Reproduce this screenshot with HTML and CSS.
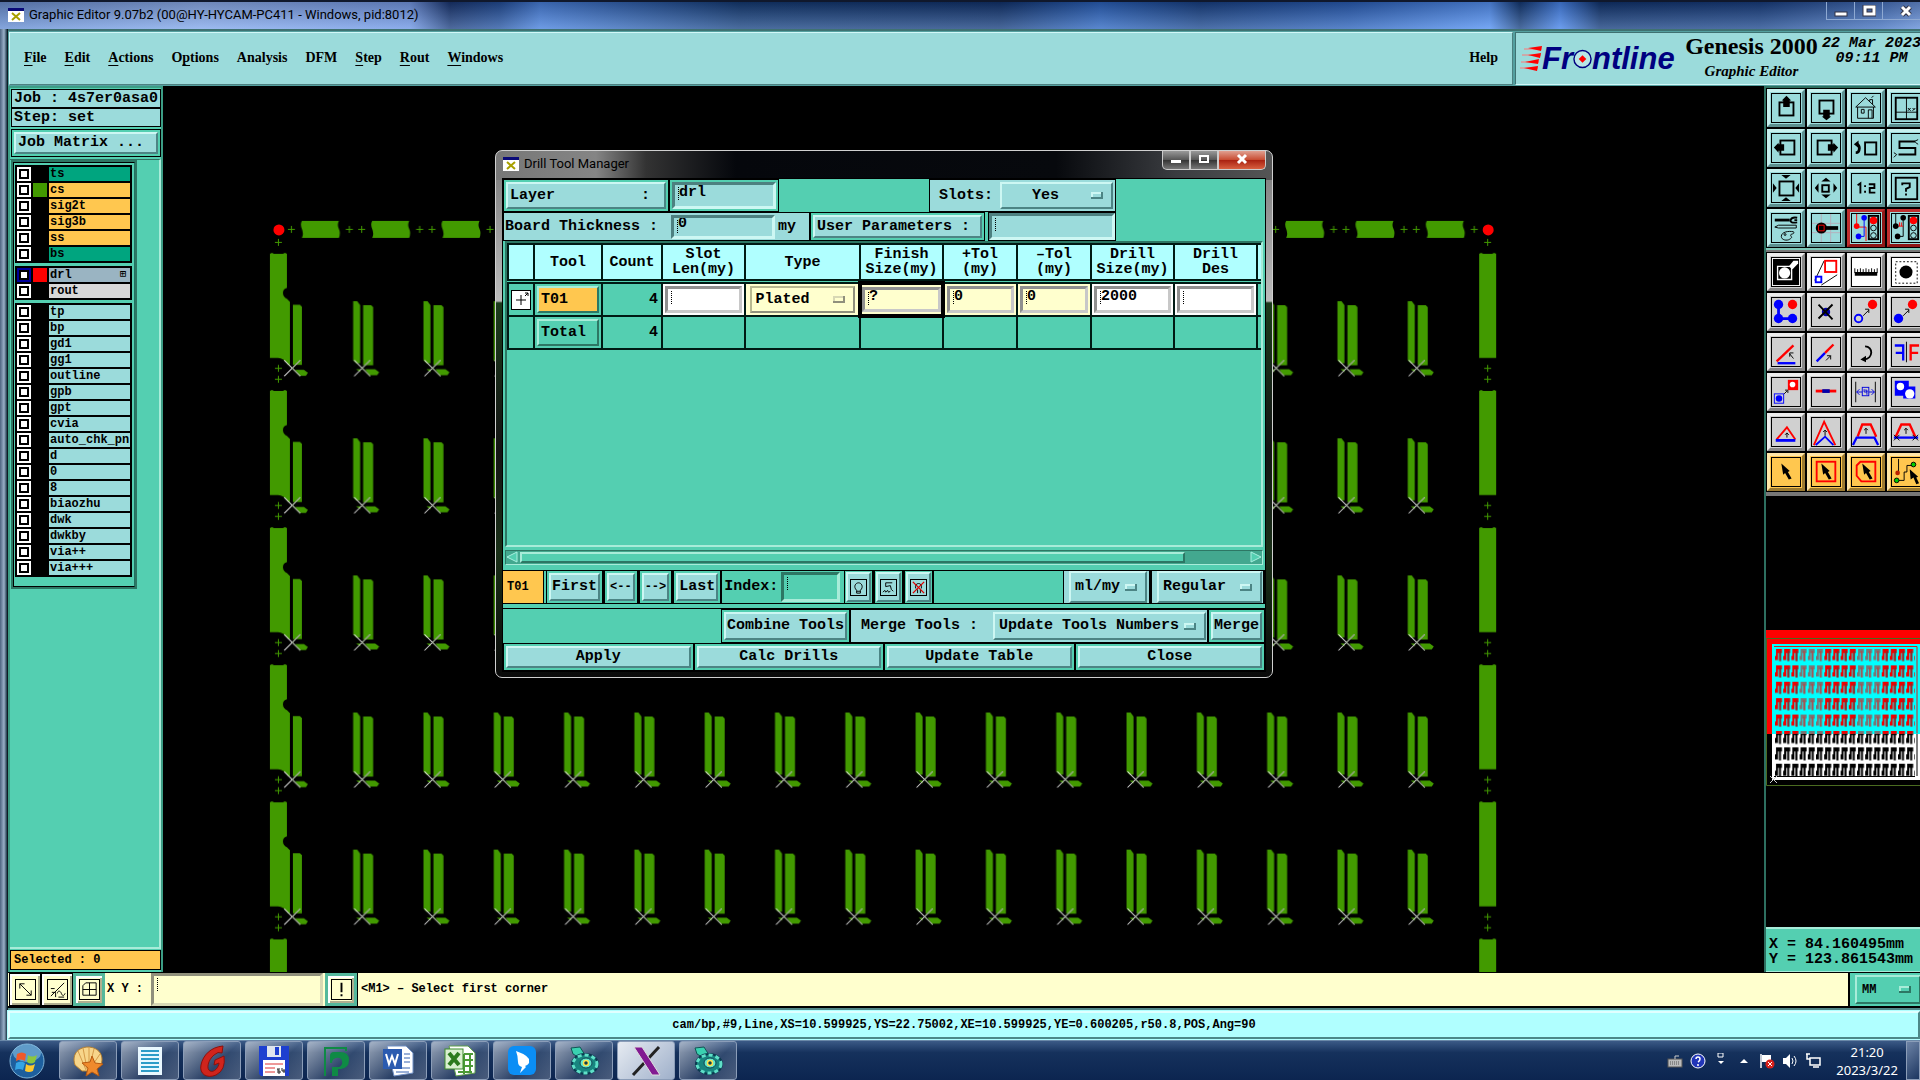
FILE: index.html
```html
<!DOCTYPE html>
<html lang="en">
<head>
    <meta charset="UTF-8">
    <meta name="viewport" content="width=device-width, initial-scale=1.0">
    <title>Graphic Editor</title>
    <link rel="stylesheet" href="styles.css">
</head>
<body>
    <header class="titlebar">
        <svg class="app-icon" viewBox="0 0 16 14"><rect width="16" height="14" fill="#fff"/><rect width="16" height="3" fill="#0a0a78"/><path d="M4 5l8 7M12 5l-8 7" stroke="#a8a000" stroke-width="2"/></svg>
        <h1>Graphic Editor 9.07b2 (00@HY-HYCAM-PC411 - Windows, pid:8012)</h1>
        <div class="window-buttons">
            <button aria-label="Minimize"><svg viewBox="0 0 14 12"><rect x="1" y="7" width="12" height="4" fill="#fff" stroke="#334"/></svg></button>
            <button aria-label="Maximize"><svg viewBox="0 0 14 12"><rect x="3" y="2" width="9" height="7" fill="none" stroke="#334" stroke-width="5"/><rect x="3" y="2" width="9" height="7" fill="none" stroke="#fff" stroke-width="3"/></svg></button>
            <button aria-label="Close"><svg viewBox="0 0 14 12"><path d="M3 2l8 8M11 2l-8 8" stroke="#334" stroke-width="5"/><path d="M3 2l8 8M11 2l-8 8" stroke="#fff" stroke-width="3"/></svg></button>
        </div>
    </header>

    <div class="window">
        <div class="top">
            <nav class="menu">
                <a href="#"><u>F</u>ile</a>
                <a href="#"><u>E</u>dit</a>
                <a href="#"><u>A</u>ctions</a>
                <a href="#">O<u>p</u>tions</a>
                <a href="#">Analysis</a>
                <a href="#">DFM</a>
                <a href="#"><u>S</u>tep</a>
                <a href="#"><u>R</u>out</a>
                <a href="#"><u>W</u>indows</a>
                <a href="#" class="help">Help</a>
            </nav>
            <div class="brand">
                <div class="logo">
                    <svg viewBox="0 0 22 26"><path d="M4 3h18M2 9h19M1 16h18M0 22h18" stroke="#f77" stroke-width="1"/><path d="M8 2l14-2-1 5zM8 9l13-2-1 5zM5 16l14-3-1 5zM4 22l14-2-1 5z" fill="#f00"/></svg>
                    <span>Fr</span>
                    <svg class="ring" viewBox="0 0 20 20"><circle cx="10" cy="10" r="9" fill="#b8e6e6" stroke="#000080" stroke-width="1.500"/><path d="M10 6l4 4-4 4-4-4z" fill="#f00"/></svg>
                    <span>ntline</span>
                </div>
                <div class="product">
                    <strong>Genesis 2000</strong>
                    <em>Graphic Editor</em>
                </div>
                <div class="date">22 Mar 2023<br>09:11 PM</div>
            </div>
        </div>

        <div class="main">
            <aside class="sidebar">
                <div class="job">
                    <div>Job : 4s7er0asa0</div>
                    <div>Step: set</div>
                </div>
                <div class="matrix"><button class="btn">Job Matrix ...</button></div>
                <div class="layers-area">
                    <div class="layers">
                        <div class="group">
                            <label class="layer board"><input type="checkbox"><i></i><span>ts</span></label>
                            <label class="layer signal"><input type="checkbox"><i class="green"></i><span>cs</span></label>
                            <label class="layer signal"><input type="checkbox"><i></i><span>sig2t</span></label>
                            <label class="layer signal"><input type="checkbox"><i></i><span>sig3b</span></label>
                            <label class="layer signal"><input type="checkbox"><i></i><span>ss</span></label>
                            <label class="layer board"><input type="checkbox"><i></i><span>bs</span></label>
                        </div>
                        <div class="group">
                            <label class="layer drill"><input type="checkbox" checked><i class="red"></i><span>drl</span><b>⊞</b></label>
                            <label class="layer rout"><input type="checkbox"><i></i><span>rout</span></label>
                        </div>
                        <div class="group">
                            <label class="layer"><input type="checkbox"><i></i><span>tp</span></label>
                            <label class="layer"><input type="checkbox"><i></i><span>bp</span></label>
                            <label class="layer"><input type="checkbox"><i></i><span>gd1</span></label>
                            <label class="layer"><input type="checkbox"><i></i><span>gg1</span></label>
                            <label class="layer"><input type="checkbox"><i></i><span>outline</span></label>
                            <label class="layer"><input type="checkbox"><i></i><span>gpb</span></label>
                            <label class="layer"><input type="checkbox"><i></i><span>gpt</span></label>
                            <label class="layer"><input type="checkbox"><i></i><span>cvia</span></label>
                            <label class="layer"><input type="checkbox"><i></i><span>auto_chk_pnl</span></label>
                            <label class="layer"><input type="checkbox"><i></i><span>d</span></label>
                            <label class="layer"><input type="checkbox"><i></i><span>0</span></label>
                            <label class="layer"><input type="checkbox"><i></i><span>8</span></label>
                            <label class="layer"><input type="checkbox"><i></i><span>biaozhu</span></label>
                            <label class="layer"><input type="checkbox"><i></i><span>dwk</span></label>
                            <label class="layer"><input type="checkbox"><i></i><span>dwkby</span></label>
                            <label class="layer"><input type="checkbox"><i></i><span>via++</span></label>
                            <label class="layer"><input type="checkbox"><i></i><span>via+++</span></label>
                        </div>
                    </div>
                </div>
                <div class="selected">Selected : 0</div>
            </aside>

            <main class="canvas">
                <svg viewBox="163 86 1602 888" preserveAspectRatio="xMinYMin slice">
                    <defs>
                        <g id="star"><path d="M-8 -8L8 8M8 -8L-8 8" stroke="#ddd" fill="none"/><path d="M0 0L8 -8M0 0L8 8" stroke="#8b9a80"/></g>
                        <pattern id="cells" patternUnits="userSpaceOnUse" x="327" y="288.4" width="70.35" height="137.2">
                            <g transform="translate(35.3 80)">
                                <path d="M-9 -67h4l3 4v58h-4l-3 -3zM1 -63h8l2 2v58h-10zM3 1h10l4 3-2 3H7zM-6 1h4v3z" fill="#429a00"/>
                                <use href="#star"/>
                            </g>
                        </pattern>
                        <pattern id="left" patternUnits="userSpaceOnUse" x="262" y="248" width="65" height="137.2">
                            <path d="M8 6l2-1 2 1h9l2-1 2 1v34q-4 1-4 5t4 6l3 3v63h-2q-4-7-10-7h-8zM31 57h7l2 2v58h-9zM33 122h9l4 3-2 3h-6z" fill="#429a00"/>
                            <path d="M13 120.500h7M16.500 117v7M13 131.500h7M16.500 128v7" stroke="#429a00"/>
                            <use href="#star" x="30.300" y="120.400"/>
                        </pattern>
                        <pattern id="right" patternUnits="userSpaceOnUse" x="1472" y="248" width="34" height="137.2">
                            <path d="M8 6l2-1 2 1h9l2-1 2 1v104H8z" fill="#429a00"/>
                            <path d="M13 120.500h7M16.500 117v7M13 131.500h7M16.500 128v7" stroke="#429a00"/>
                        </pattern>
                        <pattern id="edge" patternUnits="userSpaceOnUse" x="285" y="215" width="70.35" height="30">
                            <path d="M17 6h37q-2 4 0 8t0 9H17q2-4 0-9t0-8z" fill="#429a00"/>
                            <path d="M3 14.500h7M6.500 11v7M61 14.500h7M64.500 11v7" stroke="#429a00"/>
                        </pattern>
                    </defs>
                    <rect x="163" y="86" width="1602" height="888"/>
                    <rect x="285" y="215" width="1197" height="30" fill="url(#edge)"/>
                    <rect x="262" y="248" width="65" height="726" fill="url(#left)"/>
                    <rect x="327" y="288" width="1125" height="686" fill="url(#cells)"/>
                    <rect x="1472" y="248" width="34" height="726" fill="url(#right)"/>
                    <path d="M275 242.500h7M278.500 239v7M1485 242.500h7M1488.500 239v7" stroke="#429a00"/>
                    <circle cx="279" cy="230" r="5.500" fill="#f00"/>
                    <circle cx="1489" cy="230" r="5.500" fill="#f00"/>
                </svg>
            </main>

            <aside class="tools">
                <div class="tool-grid">
                    <button aria-label="Pan up"><svg viewBox="0 0 30 30"><rect x="8" y="9" width="15" height="14" class="o2"/><path d="M15.500 2l5 5h-1.500v7h-7V7h-1.500z"/></svg></button>
                    <button aria-label="Pan down"><svg viewBox="0 0 30 30"><rect x="8" y="7" width="15" height="14" class="o2"/><path d="M12 17h7v7h1.500l-5 4-5-4H12z"/></svg></button>
                    <button aria-label="Home"><svg viewBox="0 0 30 30"><path d="M6 14v12h17V14M4 14L14.500 4 25 14H4M19 8V6h3v5M21 4l2-2M10 16.500h3v4h-3zM17.500 26v-9h4v9" class="o"/></svg></button>
                    <button aria-label="Zoom XY"><svg viewBox="0 0 30 30"><rect x="4" y="4" width="23" height="23" class="o2"/><path d="M15.500 4v23M4 19.500h23M17 15l3 3M20 15l-3 3M22 15l2 2M25 15l-3 3" class="o"/></svg></button>
                    <button aria-label="Pan left"><svg viewBox="0 0 30 30"><rect x="9" y="7" width="15" height="15" class="o2"/><path d="M2 14.500l5-5V11h6v7H7v2z"/></svg></button>
                    <button aria-label="Pan right"><svg viewBox="0 0 30 30"><rect x="6" y="7" width="15" height="15" class="o2"/><path d="M28 14.500l-5-5V11h-6v7h6v2z"/></svg></button>
                    <button aria-label="Previous view"><svg viewBox="0 0 30 30"><rect x="14" y="9" width="12" height="13" class="o2"/><path d="M4 20c5 0 5-9 1-9" class="o3"/><path d="M2 11l5-4v8z"/></svg></button>
                    <button aria-label="Snake view"><svg viewBox="0 0 30 30"><path d="M25 8H8v7h17v7H7" class="o2"/><path d="M24 8l4-2M25 9l3 2M2 20l3 2-3 3" class="o"/></svg></button>
                    <button aria-label="Zoom in"><svg viewBox="0 0 30 30"><rect x="8" y="8" width="15" height="15" class="o2"/><path d="M10 1h10l-5 4zM10 29h10l-5-4zM1 10v10l4-5zM29 10v10l-4-5z"/></svg></button>
                    <button aria-label="Zoom out"><svg viewBox="0 0 30 30"><rect x="11" y="12" width="7" height="7" class="o2"/><path d="M10 8h10l-5-4zM10 22h10l-5 4zM7 10v10l-4-5zM23 10v10l4-5z"/></svg></button>
                    <button aria-label="Scale 1:2"><svg viewBox="0 0 30 30"><path d="M6 12l3-2v11M18 11h6v4h-5v5h6" class="o2"/><path d="M13 12h2v2h-2zM13 18h2v2h-2z"/></svg></button>
                    <button aria-label="Help"><svg viewBox="0 0 30 30"><rect x="4" y="4" width="23" height="23" class="o2"/><path d="M11 12v-2h8v4l-4 2v3M15 21v2" class="o2"/></svg></button>
                    <button aria-label="Settings"><svg viewBox="0 0 30 30"><path d="M3 5h16v3H3z"/><path d="M27 4q-6-1-7 2.500t7 2.500M24 6.500h3" class="o2"/><path d="M3 14l4-2h19v3H7zM10 24c0-5 8-6 13-5 2 3-4 2-3 4s2 2-1 4-9 1-9-3" class="o"/><circle cx="14" cy="22" r="1" class="o"/></svg></button>
                    <button aria-label="Snap"><svg viewBox="0 0 30 30"><path d="M10 0v30M20 0v30M0 10h30M0 20h30" stroke="#b6aebb"/><circle cx="10" cy="15" r="6"/><path d="M15 13h13v4H15z"/><path d="M7 12h6v6H7z" fill="none" stroke="#f00"/></svg></button>
                    <button aria-label="Net check" class="stop"><svg viewBox="0 0 30 30"><rect x="18" y="2" width="10" height="25" class="o2"/><circle cx="23" cy="7" r="4" fill="#f00"/><circle cx="23" cy="15" r="3" class="o"/><circle cx="23" cy="23" r="3" class="o"/><path d="M5 0v14h10v15" stroke="#f00" fill="none"/><path d="M13 4v20H8" stroke="#00f" fill="none"/><circle cx="5" cy="13" r="3" fill="#f00"/><circle cx="13" cy="4" r="3" fill="#00f"/><circle cx="7" cy="24" r="3" fill="#00f"/></svg></button>
                    <button aria-label="Net stop" class="stop"><svg viewBox="0 0 30 30"><rect x="18" y="2" width="10" height="25" class="o2"/><circle cx="23" cy="7" r="4" fill="#f00"/><circle cx="23" cy="15" r="3" class="o"/><circle cx="23" cy="23" r="3" class="o"/><path d="M4 0v12M12 4v20H6" class="o"/><path d="M5 13h7M8 9v4M10 9v4" stroke="#f00"/><circle cx="4" cy="13" r="3"/><circle cx="12" cy="4" r="3"/><circle cx="6" cy="24" r="3"/></svg></button>
                </div>
                <div class="tool-grid edit">
                    <button aria-label="Select feature" class="white"><svg viewBox="0 0 30 30"><rect x="1" y="1" width="28" height="28"/><path d="M6 9h15v14H6z" fill="none" stroke="#fff" stroke-width="1.500"/><circle cx="13.500" cy="16" r="6" fill="#fff"/><path d="M18 9l5-6h5v3l-6 6z" fill="#fff"/></svg></button>
                    <button aria-label="Transform" class="white"><svg viewBox="0 0 30 30"><path d="M3 24L13 3M10 29l17-11" class="o"/><rect x="14" y="3" width="12" height="12" fill="none" stroke="#f00" stroke-width="2"/><rect x="4" y="20" width="6" height="6" fill="none" stroke="#00f" stroke-width="2"/></svg></button>
                    <button aria-label="Measure" class="white"><svg viewBox="0 0 30 30"><path d="M3 11v5h24v-5M6 12v4M9 11v5M12 12v4M15 11v5M18 12v4M21 11v5M24 12v4" class="o"/><path d="M3 15h24v4H3z"/></svg></button>
                    <button aria-label="Pad" class="white"><svg viewBox="0 0 30 30"><rect x="4" y="4" width="23" height="23" class="o" stroke-dasharray="2 2"/><circle cx="15" cy="15" r="7"/></svg></button>
                    <button aria-label="Copy"><svg viewBox="0 0 30 30"><path d="M7 7v15h15" stroke="#00f" stroke-width="3" fill="none"/><circle cx="7" cy="7" r="5" fill="#00f"/><circle cx="7" cy="22" r="5" fill="#00f"/><circle cx="22" cy="22" r="5" fill="#00f"/><circle cx="22" cy="7" r="5" fill="#f00"/></svg></button>
                    <button aria-label="Delete"><svg viewBox="0 0 30 30"><circle cx="15" cy="15" r="4.500" fill="#00a"/><path d="M7 7l15 16M22 7L7 22" class="o2"/></svg></button>
                    <button aria-label="Move copy"><svg viewBox="0 0 30 30"><circle cx="22" cy="7" r="5" fill="#f00"/><circle cx="7" cy="22" r="4" fill="none" stroke="#00f" stroke-width="2"/><path d="M12 19l6-6M14 12h4v4" class="o"/></svg></button>
                    <button aria-label="Move"><svg viewBox="0 0 30 30"><circle cx="22" cy="7" r="5" fill="#f00"/><circle cx="7" cy="22" r="5" fill="#00f"/><path d="M12 19l6-6M14 12h4v4" class="o"/></svg></button>
                    <button aria-label="Rotate"><svg viewBox="0 0 30 30"><path d="M5 25L23 8" stroke="#f00" stroke-width="2.500"/><path d="M6 27h19" stroke="#00f" stroke-width="2.500"/><path d="M23 22l-4-5M19 20v-4h4" class="o"/></svg></button>
                    <button aria-label="Stretch"><svg viewBox="0 0 30 30"><path d="M5 25l9-9" stroke="#00f" stroke-width="2.500"/><path d="M14 16l9-9" stroke="#f00" stroke-width="2.500"/><path d="M15 24l5-5M16 19h4v4" class="o"/></svg></button>
                    <button aria-label="Turn"><svg viewBox="0 0 30 30"><path d="M14 9c9 0 9 13-1 14" class="o2"/><path d="M9 23l6-4v7z"/></svg></button>
                    <button aria-label="Mirror"><svg viewBox="0 0 30 30"><path d="M3 8h9v16M4 16h8" stroke="#00f" stroke-width="2.500" fill="none"/><path d="M29 8h-9v16M28 16h-8" stroke="#f00" stroke-width="2.500" fill="none"/><path d="M15.500 4v22" class="o"/></svg></button>
                    <button aria-label="Resize pad"><svg viewBox="0 0 30 30"><rect x="17" y="2" width="11" height="11" fill="#f00"/><circle cx="22" cy="7" r="3" fill="#fff"/><rect x="2.500" y="17" width="10" height="10" fill="none" stroke="#00f"/><circle cx="7.500" cy="22" r="3.500" fill="#00f"/><path d="M13 17l3-3M14 13h3v3" class="o"/></svg></button>
                    <button aria-label="Line"><svg viewBox="0 0 30 30"><path d="M4 14h22" stroke="#f00" stroke-width="3"/><path d="M11 14h8" stroke="#00a" stroke-width="4"/></svg></button>
                    <button aria-label="Spacing"><svg viewBox="0 0 30 30"><path d="M4 4v22M25 4v22" class="o"/><path d="M5 15h19M8 12l-3 3 3 3M21 12l3 3-3 3" stroke="#00d" fill="none"/><rect x="11" y="10" width="7" height="9" fill="#d0d0d0" stroke="#00d"/><path d="M13 12v3h3v-2h-2M16 14v4" stroke="#00d" fill="none"/></svg></button>
                    <button aria-label="Surface"><svg viewBox="0 0 30 30"><path d="M3 3h15v6h7v13H12v-3H3z" fill="#00f"/><circle cx="9" cy="9" r="4" fill="#fff"/><circle cx="19" cy="17" r="5" fill="#fff"/></svg></button>
                    <button aria-label="Triangle"><svg viewBox="0 0 30 30"><path d="M5 23L16 10l9 13" stroke="#f00" stroke-width="2" fill="none"/><path d="M4 24h21" stroke="#00f" stroke-width="3"/><path d="M16 21v-5M14 18l2-2 2 2" class="o"/></svg></button>
                    <button aria-label="Angle"><svg viewBox="0 0 30 30"><path d="M2 29L13 4l12 25" stroke="#f00" stroke-width="2" fill="none"/><path d="M4 29l10-9 9 9" stroke="#00f" stroke-width="2" fill="none"/><path d="M14 19v-6M12 15l2-2 2 2" class="o"/></svg></button>
                    <button aria-label="Trapezoid"><svg viewBox="0 0 30 30"><path d="M6 20l5-13h9l6 13" stroke="#f00" stroke-width="2.500" fill="none"/><path d="M1 29l4-8h19l4 8" stroke="#00f" stroke-width="2.500" fill="none"/><path d="M15 17v-6M13 13l2-2 2 2" class="o"/></svg></button>
                    <button aria-label="Trapezoid cut"><svg viewBox="0 0 30 30"><path d="M4 20l6-13h9l6 13" stroke="#f00" stroke-width="2.500" fill="none"/><path d="M2 21h26" stroke="#00f" stroke-width="2.500"/><path d="M15 17v-6M13 13l2-2 2 2M2 18l6 6M8 18l-6 6M22 18l6 6M28 18l-6 6" class="o"/></svg></button>
                    <button aria-label="Select" class="pick"><svg viewBox="0 0 30 30"><path d="M10 6l9 8-2 1 4 7-3 1-4-7-2 2z"/></svg></button>
                    <button aria-label="Select in rectangle" class="pick"><svg viewBox="0 0 30 30"><rect x="5" y="4" width="20" height="21" fill="none" stroke="#f00" stroke-width="2"/><path d="M10 6l9 8-2 1 4 7-3 1-4-7-2 2z"/></svg></button>
                    <button aria-label="Select in polygon" class="pick"><svg viewBox="0 0 30 30"><path d="M9 4h16v21H10l-5-6V8z" fill="none" stroke="#f00" stroke-width="2"/><path d="M11 6l9 8-2 1 4 7-3 1-4-7-2 2z"/></svg></button>
                    <button aria-label="Select net" class="pick"><svg viewBox="0 0 30 30"><path d="M7 1v16M7 24h6V15h3V8h7" class="o"/><circle cx="6" cy="16" r="2.500" fill="#b20"/><circle cx="5" cy="24" r="2.500" fill="#0c0" stroke="#000"/><circle cx="23" cy="7" r="2.500" fill="#0c0" stroke="#000"/><path d="M19 12l9 8-2 1 3 6-3 1-3-7-3 2z"/></svg></button>
                </div>
                <svg class="overview" viewBox="1766 496 154 433" preserveAspectRatio="xMinYMin slice">
                    <defs>
                        <pattern id="unit-red" patternUnits="userSpaceOnUse" x="1775" y="648" width="8.2" height="16.4"><path d="M1 1h6v4h-1v8H4V5H3v7H0V8h1z" fill="#f00000"/><path d="M5.500 3v10" stroke="#444"/></pattern>
                        <pattern id="unit-gray" patternUnits="userSpaceOnUse" x="1775" y="648" width="8.2" height="16.4"><path d="M1 1h6v4h-1v8H4V5H3v7H0V8h1z" fill="#777"/><path d="M4.500 3v10" stroke="#c33"/></pattern>
                        <pattern id="unit-black" patternUnits="userSpaceOnUse" x="1775" y="648" width="8.2" height="16.4"><path d="M1 1h6v4h-1v9H4V5H3v8H0V8h1z"/></pattern>
                    </defs>
                    <rect x="1766" y="496" width="154" height="433"/>
                    <rect x="1766" y="630" width="154" height="104" fill="#f00"/>
                    <path d="M1920 638.500H1766.500V785.500H1920" fill="none" stroke="#4a6b20"/>
                    <rect x="1772" y="644" width="148" height="90" fill="#00ffff"/>
                    <rect x="1772" y="734" width="148" height="46" fill="#fff"/>
                    <path d="M1774 646.500h143v87" fill="none" stroke="#c22"/>
                    <rect x="1775" y="648" width="140" height="86" fill="url(#unit-red)"/>
                    <path d="M1799.600 648h24.600v86h-24.600zM1857 648h24.600v86H1857z" fill="#00ffff"/>
                    <path d="M1799.600 648h24.600v86h-24.600zM1857 648h24.600v86H1857z" fill="url(#unit-gray)"/>
                    <rect x="1775" y="734" width="140" height="42" fill="url(#unit-black)"/>
                    <path d="M1917 734v42M1774 776.500h141" fill="none" stroke="#000"/>
                    <path d="M1770 776l7 7M1777 776l-7 7" stroke="#ccc"/>
                </svg>
                <div class="position">X = 84.160495mm<br>Y = 123.861543mm</div>
            </aside>
        </div>

        <div class="prompt">
            <button aria-label="Absolute"><svg viewBox="0 0 20 20"><path d="M4 4l12 12M4 9V4h5M16 11v5h-5" class="o"/></svg></button>
            <button aria-label="Angle mode"><svg viewBox="0 0 20 20"><path d="M3 17L17 3M3 9h4M4 13h4v5M10 14c0-3 3-3 4 0s3 3 4 0M11 18h6" class="o"/></svg></button>
            <button aria-label="Grid" class="teal"><svg viewBox="0 0 20 20"><path d="M3 6l3-3h11v13H3zM10 3v13M3 10h14" class="o"/></svg></button>
            <label for="xy">X Y :</label>
            <input id="xy" type="text" class="field">
            <button aria-label="Alert" class="teal"><svg viewBox="0 0 20 20"><path d="M9 3h2v10H9zM9 15h2v2H9z"/></svg></button>
            <p>&lt;M1&gt; – Select first corner</p>
            <div class="units"><select aria-label="Units" class="menu-select"><option>MM</option></select></div>
        </div>
        <div class="status"><div>cam/bp,#9,Line,XS=10.599925,YS=22.75002,XE=10.599925,YE=0.600205,r50.8,POS,Ang=90</div></div>
    </div>

    <section class="dialog" aria-label="Drill Tool Manager">
        <header>
            <svg class="app-icon" viewBox="0 0 16 14"><rect width="16" height="14" fill="#fff"/><rect width="16" height="3" fill="#0a0a78"/><path d="M4 5l8 7M12 5l-8 7" stroke="#a8a000" stroke-width="2"/></svg>
            <h2>Drill Tool Manager</h2>
            <div class="window-buttons">
                <button aria-label="Minimize dialog"><svg viewBox="0 0 14 12"><rect x="2" y="7" width="10" height="3" fill="#fff"/></svg></button>
                <button aria-label="Maximize dialog"><svg viewBox="0 0 14 12"><rect x="3" y="3" width="8" height="6" fill="none" stroke="#fff" stroke-width="2"/></svg></button>
                <button aria-label="Close dialog" class="close"><svg viewBox="0 0 14 12"><path d="M3 2l8 8M11 2l-8 8" stroke="#fff" stroke-width="3"/></svg></button>
            </div>
        </header>
        <div class="dialog-body">
            <div class="form-row">
                <div class="box layer-box"><button class="btn spread"><span>Layer</span><span>:</span></button></div>
                <div class="box"><input type="text" class="field layer-name" aria-label="Layer" value="drl"></div>
                <div class="space"></div>
                <div class="box aqua slots"><label for="slots">Slots:</label><select id="slots" class="menu-select"><option>Yes</option></select></div>
                <div class="space last"></div>
            </div>
            <div class="form-row thick">
                <div class="box aqua"><label for="thickness">Board Thickness :</label><input id="thickness" type="text" class="field" value="0"><span>my</span></div>
                <div class="box params"><button class="btn">User Parameters :</button></div>
                <div class="box user"><input type="text" class="field" aria-label="User Parameters"></div>
                <div class="space last"></div>
            </div>
            <div class="table-wrap">
                <table>
                    <colgroup><col class="w-sel"><col class="w-tool"><col class="w-count"><col class="w-wide"><col class="w-type"><col class="w-wide"><col class="w-tol"><col class="w-tol"><col class="w-wide"><col class="w-wide"><col class="w-wide"></colgroup>
                    <thead>
                        <tr><th></th><th>Tool</th><th>Count</th><th>Slot<br>Len(my)</th><th>Type</th><th>Finish<br>Size(my)</th><th>+Tol<br>(my)</th><th>–Tol<br>(my)</th><th>Drill<br>Size(my)</th><th>Drill<br>Des</th><th class="cut"><br>S</th></tr>
                    </thead>
                    <tbody>
                        <tr>
                            <td><button class="expand" aria-label="Expand T01"><svg viewBox="0 0 18 18"><path d="M9 4v10M4 9h10M13 5l3-3h-3M16 2v3" class="o"/></svg></button></td>
                            <td><button class="btn orange">T01</button></td>
                            <td class="num">4</td>
                            <td class="white"><input type="text" class="field" aria-label="Slot length"></td>
                            <td class="cream"><select class="menu-select" aria-label="Type"><option>Plated</option></select></td>
                            <td class="cream active"><input type="text" class="field" aria-label="Finish size" value="?"></td>
                            <td class="cream"><input type="text" class="field" aria-label="Plus tolerance" value="0"></td>
                            <td class="cream"><input type="text" class="field" aria-label="Minus tolerance" value="0"></td>
                            <td class="white"><input type="text" class="field" aria-label="Drill size" value="2000"></td>
                            <td class="white"><input type="text" class="field" aria-label="Drill designation"></td>
                            <td></td>
                        </tr>
                        <tr><td></td><td><button class="btn plain">Total</button></td><td class="num">4</td><td></td><td></td><td></td><td></td><td></td><td></td><td></td><td></td></tr>
                    </tbody>
                </table>
            </div>
            <div class="scrollbar"><svg viewBox="0 0 12 12"><path d="M11 1v10L1 6z" fill="#54cfb1" stroke="#a8f0df"/></svg><div></div><svg viewBox="0 0 12 12"><path d="M1 1v10l10-5z" fill="#54cfb1" stroke="#a8f0df"/></svg></div>
            <div class="form-row nav-row">
                <div class="current">T01</div>
                <div class="box"><button class="btn">First</button></div>
                <div class="box"><button class="btn arrow">&lt;--</button></div>
                <div class="box"><button class="btn arrow">--&gt;</button></div>
                <div class="box"><button class="btn">Last</button></div>
                <div class="index"><label for="index">Index:</label><input id="index" type="text" class="field"></div>
                <div class="box icon-box"><button class="btn icon" aria-label="Highlight"><svg viewBox="0 0 16 16"><path d="M6 11c-4-4-1-8 2-8s6 4 2 8v3H6zM6 12h4" class="o"/></svg></button></div>
                <div class="box icon-box"><button class="btn icon" aria-label="Select tool"><svg viewBox="0 0 16 16"><path d="M12 3H5v4l5-1 1 4 2 2M2 13l2-2 1 2 2-2 1 2 2-1" class="o"/></svg></button></div>
                <div class="box icon-box"><button class="btn icon" aria-label="Clear"><svg viewBox="0 0 16 16"><path d="M5 9c-2-7 8-7 6 0M7 10v4M10 10v4" class="o"/><path d="M2 2l12 12M14 2L2 14" stroke="#e00000" stroke-width="1.500"/></svg></button></div>
                <div class="space last"></div>
                <div class="box aqua unit"><select class="menu-select" aria-label="Dialog units"><option>ml/my</option></select></div>
                <div class="box aqua mode"><select class="menu-select" aria-label="Mode"><option>Regular</option></select></div>
            </div>
            <div class="form-row merge-row">
                <div class="space last"></div>
                <div class="box"><button class="btn">Combine Tools</button></div>
                <div class="box aqua merge"><label for="merge">Merge Tools :</label><select id="merge" class="menu-select"><option>Update Tools Numbers</option></select></div>
                <div class="box"><button class="btn">Merge</button></div>
            </div>
            <div class="form-row actions">
                <div class="box"><button class="btn">Apply</button></div>
                <div class="box"><button class="btn">Calc Drills</button></div>
                <div class="box"><button class="btn">Update Table</button></div>
                <div class="box"><button class="btn">Close</button></div>
            </div>
        </div>
    </section>

    <footer class="taskbar">
        <button class="start" aria-label="Start"><svg viewBox="0 0 38 38"><circle cx="19" cy="19" r="17" fill="#1d5f9e" stroke="#7fb4d8"/><ellipse cx="19" cy="11" rx="14" ry="9" fill="#8cc3e4" opacity=".6"/><path d="M9 12q5-3 9 0l-1 7q-4-3-9 0z" fill="#f0592a"/><path d="M20 13q4 3 9 0l-2 7q-4 3-8 0z" fill="#8cc63e"/><path d="M8 21q5-3 9 0l-2 7q-4-2-8 0z" fill="#35a5e5"/><path d="M18 22q4 3 9 0l-2 7q-4 2-8 0z" fill="#fdc82f"/></svg></button>
        <div class="tasks">
            <button aria-label="Shell"><svg viewBox="0 0 32 32"><path d="M3 20C-1 8 8 2 16 2s17 6 13 18l-8 6H10z" fill="#f7d58a" stroke="#b8812f"/><path d="M6 6l8 19M11 3l4 21M17 2v22M22 4l-5 20M28 9L18 24" stroke="#d49b49"/><path d="M20 11l3 7 8 1-6 5 2 7-7-4-6 4 2-8-6-5 8-1z" fill="#f08a2c" stroke="#b85a10"/></svg></button>
            <button aria-label="Notes"><svg viewBox="0 0 32 32"><rect x="4" y="2" width="24" height="28" fill="#e9f8ff"/><path d="M7 6h18M7 10h18M7 14h18M7 18h18M7 22h18M7 26h18" stroke="#2d9cc8" stroke-width="2"/></svg></button>
            <button aria-label="G editor"><svg viewBox="0 0 32 32"><path d="M27 1l-1 7q-4-2-8 2c-6 5-8 14-4 16s9-4 9-8l-5 2 1-5 9-4q2 14-8 19c-9 4-17-1-15-10C7 10 15 2 27 1z" fill="#d0241c" stroke="#8e100c"/></svg></button>
            <button aria-label="Disk"><svg viewBox="0 0 32 32"><path d="M1 1h30v30H3l-2-2z" fill="#1d3fd0"/><rect x="9" y="1" width="14" height="11" fill="#dfe5ee"/><rect x="17" y="2" width="4" height="8" fill="#1d3fd0"/><rect x="5" y="15" width="22" height="16" fill="#fff"/><path d="M7 19h18M7 23h10M7 27h10" stroke="#d33"/><path d="M19 24h3M20 24v4h2v-2h-2M24 23v3h3M26 24v4" stroke="#222" fill="none"/></svg></button>
            <button aria-label="P editor"><svg viewBox="0 0 32 32"><path d="M5 31V3h21v3" fill="none" stroke="#0f8a45" stroke-width="2"/><path d="M10 11q0-4 4-4h6q9 0 9 8t-8 9h-3v7h-6v-9h7q4-2 3-6t-6-3q-4 1-4 5h-2z" fill="#0f8a45"/></svg></button>
            <button aria-label="Word"><svg viewBox="0 0 32 32"><path d="M5 1h19l7 7v20l-19 3z" fill="#fff" stroke="#6f8fc4"/><path d="M22 9h6M22 13h6M22 17h6M14 23h14M14 27h13" stroke="#3763b0"/><rect x="1" y="4" width="19" height="20" fill="#2b5bb0"/><path d="M4 9l3 10 3-8 3 8 3-10" fill="none" stroke="#fff" stroke-width="2"/></svg></button>
            <button aria-label="Excel"><svg viewBox="0 0 32 32"><path d="M5 1h19l7 7v20l-19 3z" fill="#fff" stroke="#5f9f4a"/><path d="M20 9h9M20 15h9M14 21h15M14 27h14M20 9v20M26 9v18" stroke="#4b9a35" stroke-width="2"/><rect x="1" y="4" width="18" height="20" fill="#d9efd0" stroke="#3c8b2c"/><path d="M5 8l10 12M15 8L5 20" stroke="#2c7a1e" stroke-width="4"/></svg></button>
            <button aria-label="Messenger"><svg viewBox="0 0 32 32"><rect x="2" y="1" width="28" height="29" rx="6" fill="#0b8ef5"/><path d="M10 6q14 5 13 10 1 3-4 5l1 1-6 6 2-6q-4-1-4-5 0-6-2-11z" fill="#fff"/></svg></button>
            <button aria-label="Genesis"><svg viewBox="0 0 32 32"><path d="M3 3l9-1 5 8-5 3-7-4z" fill="#3ad1b0" stroke="#155"/><ellipse cx="17" cy="19" rx="13" ry="10" fill="#18857f" stroke="#0b3a50" stroke-width="2"/><ellipse cx="17" cy="19" rx="12" ry="9" fill="none" stroke="#5fe0c8" stroke-width="3" stroke-dasharray="4 3"/><ellipse cx="18" cy="18" rx="6" ry="5" fill="#61e7cb" stroke="#145"/><circle cx="18" cy="18" r="2.500" fill="#10404a" stroke="#ffe14d" stroke-width="1.500"/></svg></button>
            <button aria-label="X server" class="current-task"><svg viewBox="0 0 32 32"><path d="M29 2L3 30" stroke="#222" stroke-width="3"/><path d="M4 2h8l18 28h-8z" fill="#821a92" stroke="#ddd"/></svg></button>
            <button aria-label="Genesis tools"><svg viewBox="0 0 32 32"><path d="M3 3l9-1 5 8-5 3-7-4z" fill="#3ad1b0" stroke="#155"/><ellipse cx="17" cy="19" rx="13" ry="10" fill="#18857f" stroke="#0b3a50" stroke-width="2"/><ellipse cx="17" cy="19" rx="12" ry="9" fill="none" stroke="#5fe0c8" stroke-width="3" stroke-dasharray="4 3"/><ellipse cx="18" cy="18" rx="6" ry="5" fill="#61e7cb" stroke="#145"/><circle cx="18" cy="18" r="2.500" fill="#10404a" stroke="#ffe14d" stroke-width="1.500"/></svg></button>
        </div>
        <div class="tray">
            <svg viewBox="0 0 16 16"><rect x="1" y="6" width="14" height="8" fill="#bbb" stroke="#555"/><path d="M3 9h10M3 11h10" stroke="#555" stroke-dasharray="1 1"/><path d="M8 6V3h4" stroke="#ccc" fill="none"/></svg>
            <svg viewBox="0 0 16 16"><circle cx="8" cy="8" r="7" fill="#2236b8" stroke="#fff"/><path d="M6 6q0-2 2-2t2 2-2 3M8 11v2" stroke="#fff" stroke-width="1.500" fill="none"/></svg>
            <svg viewBox="0 0 16 16"><path d="M5 0h5v4H5z" fill="none" stroke="#fff"/><path d="M5 8h6l-3 3z" fill="#fff"/></svg>
            <svg viewBox="0 0 16 16"><path d="M4 10h8L8 6z" fill="#fff"/></svg>
            <svg viewBox="0 0 16 16"><path d="M2 1v14" stroke="#fff" stroke-width="1.500"/><path d="M3 2h9v7H3z" fill="#fff"/><circle cx="11" cy="11" r="4.500" fill="#d8201a"/><path d="M9 9l4 4M13 9l-4 4" stroke="#fff"/></svg>
            <svg viewBox="0 0 16 16"><path d="M1 5h3l4-4v14l-4-4H1z" fill="#fff"/><path d="M10 5q2 3 0 6M12 3q4 5 0 10" stroke="#fff" fill="none"/></svg>
            <svg viewBox="0 0 16 16"><path d="M5 5h10v7H5zM8 14h6M2 1v5h3M1 1h4" stroke="#fff" stroke-width="1.500" fill="none"/></svg>
            <time>21:20<br>2023/3/22</time>
        </div>
        <button class="show-desktop" aria-label="Show desktop"></button>
    </footer>
</body>
</html>
```
FILE: styles.css
```css
* {
    box-sizing: border-box;
}
body {
    display: flex;
    flex-direction: column;
    height: 100vh;
    margin: 0;
    overflow: hidden;
    background: #000;
    color: #000;
    font: bold 15px/18px "Liberation Mono", monospace;
}
button, input, select {
    margin: 0;
    padding: 0;
    border: 0;
    border-radius: 0;
    background: none;
    color: inherit;
    font: inherit;
    appearance: none;
}
svg {
    display: block;
}
.o, .o2, .o3 {
    fill: none;
    stroke: #000;
}
.o2 {
    stroke-width: 2;
}
.o3 {
    stroke-width: 3;
}

/* main window title */
.titlebar {
    display: flex;
    align-items: center;
    flex: 0 0 29px;
    padding: 0 0 2px 8px;
    gap: 5px;
    border-top: 2px solid #10182c;
    background: linear-gradient(rgba(10, 30, 80, 0.3), rgba(160, 195, 255, 0.4)), linear-gradient(90deg, #7392c6 0, #9ab5e6 200px, #7f9ede 410px, #182f5c 450px, #234a88 500px, #4d82d4 540px, #12345f 740px, #0f2c58 1000px, #2b60b0 1100px, #163a70 1200px, #2a5ba8 1350px, #5a95ee 1490px, #12325e 1520px, #4b86e4 1560px, #0e2c58 1600px, #17386c 1760px, #4a70ae 1880px, #6f92cc 1920px);
}
.app-icon {
    width: 16px;
    height: 14px;
}
h1, h2 {
    margin: 0;
    font: 13px/20px Roboto, sans-serif;
}
.window-buttons {
    display: flex;
    align-self: flex-start;
    margin-left: auto;
}
.titlebar .window-buttons button {
    width: 28px;
    height: 18px;
    border: 1px solid #8ea9d2;
    border-top: 0;
    border-right: 0;
}
.titlebar .window-buttons button:last-child {
    width: 38px;
    padding-left: 8px;
}
.window-buttons svg {
    width: 14px;
    height: 12px;
    margin: 0 auto;
}

.window {
    display: flex;
    flex-direction: column;
    flex: 1;
    min-height: 0;
    padding-left: 8px;
    background: linear-gradient(90deg, #4d6480 0, #9ab0c8 4px, #1c3848 7px, #000 8px);
}
.top {
    display: flex;
    flex: 0 0 57px;
    border-top: 2px solid #3f7272;
}
.menu, .brand {
    background: #9bdbdb;
    border: 2px solid;
    border-color: #d2f8f8 #4d8080 #4d8080 #d2f8f8;
    outline: 1px solid #54a0a0;
    outline-offset: -1px;
}
.menu {
    display: flex;
    flex: 1;
    align-items: center;
    padding: 0 14px 2px;
    gap: 18px;
    font: bold 14px/18px "Liberation Serif", serif;
}
.menu a {
    color: #000;
    text-decoration: none;
}
.menu u {
    text-underline-offset: 3px;
}
.menu .help {
    margin-left: auto;
}
.brand {
    display: flex;
    flex: 0 0 408px;
    margin-right: -2px;
    border-color: #3f7272 #9bdbdb #d2f8f8 #3f7272;
    overflow: hidden;
    white-space: nowrap;
}
.logo {
    display: flex;
    align-items: center;
    flex: 0 0 165px;
    padding-left: 4px;
    color: #000080;
    font: italic bold 31px/46px "Liberation Sans", sans-serif;
}
.logo svg {
    flex: none;
    width: 22px;
    height: 26px;
}
.logo .ring {
    width: 19px;
    height: 20px;
}
.product {
    display: flex;
    flex-direction: column;
    align-items: center;
    flex: 0 0 141px;
    font: bold 24px/26px "Liberation Serif", serif;
}
.product em {
    font-size: 15px;
    line-height: 24px;
}
.date {
    font-style: italic;
    font-size: 15px;
    line-height: 15px;
    padding-top: 3px;
    text-align: center;
}

.main {
    display: flex;
    flex: 1;
    min-height: 0;
}
.sidebar {
    display: flex;
    flex-direction: column;
    flex: 0 0 155px;
    border: 2px solid #3c9d85;
    border-bottom: 0;
    background: #54cfb1;
}
.job div {
    border: 1px solid #000;
    height: 19px;
    padding-left: 2px;
    overflow: hidden;
    background: #9bdbdb;
    white-space: nowrap;
}
.job {
    margin: 1px 0 2px 1px;
}
.matrix, .box {
    border: 1px solid #000;
    background: #54cfb1;
    padding: 2px;
}
.matrix {
    margin-left: 1px;
}
.btn {
    display: block;
    width: 100%;
    height: 100%;
    border: 2px solid;
    border-color: #cdf7f3 #4c8484 #4c8484 #cdf7f3;
    background: #9bdbdb;
    white-space: nowrap;
    padding: 0 2px;
}
.matrix .btn {
    height: 22px;
    text-align: left;
}
.layers-area {
    flex: 1;
    margin-top: 2px;
    padding: 2px 3px;
    border-top: 1px solid #2d6f60;
    border-right: 2px solid #a8ecd9;
    border-bottom: 2px solid #a8ecd9;
}
.layers {
    display: flex;
    flex-direction: column;
    gap: 3px;
    width: 122px;
    padding: 2px 2px 9px 1px;
    border: 1px solid #000;
    outline: 2px solid #2d7764;
    border-right-color: #237060;
}
.group {
    display: flex;
    flex-direction: column;
    gap: 2px;
    padding: 2px;
    background: #000;
    font-size: 12px;
    line-height: 14px;
}
.layer {
    display: flex;
    gap: 2px;
    height: 14px;
}
.layer input {
    flex: 0 0 14px;
    height: 14px;
    border: 2px solid #fff;
    background: #fff;
    box-shadow: inset 0 0 0 2px #000;
}
.layer input:checked {
    border-color: #00009c;
}
.layer i {
    flex: 0 0 14px;
}
.layer .green {
    background: #429a00;
}
.layer .red {
    background: #f00;
}
.layer span {
    flex: 1;
    min-width: 0;
    overflow: hidden;
    padding-left: 1px;
    background: #9bdbdb;
}
.layer b {
    width: 10px;
    margin-left: -2px;
    background: #9ab4c2;
    font-size: 10px;
}
.board span {
    background: #00a57f;
}
.signal span {
    background: #ffc74f;
}
.drill span {
    background: #9ab4c2;
}
.rout span {
    background: #d8d8d8;
}
.selected {
    margin: 1px 0 2px;
    padding-left: 3px;
    border: 1px solid #000;
    background: #ffc74f;
    font-size: 12px;
}

.canvas {
    display: flex;
    flex: 1;
    min-width: 0;
}
.canvas svg {
    width: 100%;
    height: 100%;
}

/* tool palette */
.tools {
    display: flex;
    flex-direction: column;
    flex: 0 0 156px;
    border-left: 2px solid #2d6f60;
    overflow: hidden;
}
.tool-grid {
    display: grid;
    grid-template-columns: repeat(4, 38px);
    gap: 2px;
    padding: 1px;
    border-top: 2px solid #2d6f60;
    border-bottom: 2px solid #7fc8b8;
}
.tool-grid.edit {
    border-top: 2px solid #777;
    border-bottom: 4px solid #777;
}
.tool-grid button {
    height: 38px;
    padding: 1px;
    border: 3px solid;
    border-color: #c6f0ee #5c9090 #5c9090 #c6f0ee;
    background: #9bdbdb;
}
.tool-grid svg {
    width: 30px;
    height: 30px;
    border: 1px solid #000;
    overflow: visible;
}
.tool-grid.edit button {
    border-color: #eee #888 #888 #eee;
    background: #d0d0d0;
}
.tool-grid .stop {
    border-color: #c03030 #901818 #901818 #c03030;
}
.tool-grid.edit .white svg {
    background: #fff;
}
.tool-grid.edit .pick {
    border-color: #ffe6a8 #9c7a30 #9c7a30 #ffe6a8;
    background: #ffc74f;
}
.overview {
    flex: 1;
    min-height: 0;
    width: 154px;
}
.position {
    flex: none;
    padding: 8px 2px 4px 3px;
    border-top: 2px solid #a8ecd9;
    border-bottom: 1px solid #a8ecd9;
    background: #54cfb1;
    font-size: 15px;
    line-height: 15px;
    white-space: nowrap;
}

/* prompt and status */
.prompt {
    display: flex;
    align-items: stretch;
    flex: 0 0 34px;
    padding-left: 1px;
    border-top: 1px solid #000;
    border-bottom: 2px solid #000;
    background: #ffffce;
    font-size: 12px;
}
.prompt button {
    flex: 0 0 32px;
    padding: 3px;
    border: 1px solid #000;
    box-shadow: inset 2px 2px #fff, inset -2px -2px #b0b090;
}
.prompt svg {
    width: 21px;
    height: 21px;
    margin: 0 auto;
    border: 1px solid #000;
}
.prompt .teal {
    border: 3px solid #54b89c;
    padding: 0;
}
.prompt label, .prompt p {
    margin: 0;
    line-height: 33px;
}
.prompt label {
    flex: 0 0 46px;
    padding-left: 2px;
    white-space: nowrap;
}
.prompt p {
    flex: 1;
    padding-left: 3px;
    border-left: 1px solid #000;
}
.field {
    min-width: 0;
    border: 3px solid;
    border-color: #4d8080 #cdf7f3 #cdf7f3 #4d8080;
    padding: 0 0 6px 4px;
    background: repeating-linear-gradient(#000 0 1px, transparent 1px 2px) 3px 2px / 1px 14px no-repeat;
}
.prompt .field {
    flex: 0 0 172px;
    border-color: #90907c #d8d8b4 #d8d8b4 #90907c;
    margin-right: 2px;
}
.units {
    flex: 0 0 73px;
    margin-right: -1px;
    padding: 2px 0 2px 5px;
    border-left: 2px solid #000;
    background: #54cfb1;
}
/* option menu with the raised bar at its right */
.menu-select {
    border: 2px solid;
    border-color: #cdf7f3 #4c8484 #4c8484 #cdf7f3;
    background-color: transparent;
    background-image: linear-gradient(#9bdbdb, #9bdbdb), linear-gradient(#cdf7f3, #cdf7f3), linear-gradient(#4c8484, #4c8484);
    background-position: right 10px center, right 10px top calc(50% - 1px), right 8px center;
    background-size: 8px 3px, 10px 5px, 12px 7px;
    background-repeat: no-repeat;
    text-align: left;
}
.units .menu-select {
    width: 100%;
    height: 100%;
    padding-left: 5px;
    border-color: #a8ecd9 #2d7764 #2d7764 #a8ecd9;
    background-image: linear-gradient(#54cfb1, #54cfb1), linear-gradient(#a8ecd9, #a8ecd9), linear-gradient(#2d7764, #2d7764);
}
.status {
    flex: 0 0 32px;
    padding: 1px 0;
    border-top: 2px solid #508888;
    background: #000;
    font-size: 12px;
    line-height: 24px;
    text-align: center;
}
.status div {
    height: 28px;
    border: 2px solid;
    border-color: #e0ffff #4c8888 #4c8888 #e0ffff;
    outline: 1px solid #b0ffff;
    background: #b0ffff;
}

/* drill tool manager */
.dialog {
    position: absolute;
    left: 495px;
    top: 150px;
    width: 778px;
    padding: 0 6px 5px;
    border: 1px solid #d0d0d0;
    border-radius: 7px;
    background: linear-gradient(90deg, #777 0, #858585 100px, #333 150px, #05070c 240px, #07090d 560px, #3a3c40 680px, #555 100%) top / 100% 29px no-repeat, linear-gradient(#777, #aaa 110px, #bbb 150px, #1c3c1c 152px, #141414 300px, #1a3018 400px, #0a0a0a);
}
.dialog header {
    display: flex;
    align-items: center;
    height: 27px;
    padding: 0 0 2px 1px;
    gap: 5px;
}
.dialog .window-buttons button {
    height: 19px;
    width: 28px;
    padding-bottom: 2px;
    border: 1px solid #ccc;
    border-top: 0;
    background: linear-gradient(#999, #555 50%, #333 50%, #777);
}
.dialog .window-buttons button:first-child {
    border-radius: 0 0 0 5px;
}
.dialog .window-buttons .close {
    width: 48px;
    border-radius: 0 0 5px 0;
    background: linear-gradient(#e0a090, #c84a30 50%, #a82010 50%, #d86040);
}
.dialog-body {
    border: 1px solid #000;
    background: #54cfb1;
}
.form-row {
    display: flex;
    height: 33px;
}
.form-row label, .form-row span {
    white-space: nowrap;
}
.spread {
    display: flex;
    justify-content: space-between;
    align-items: center;
    padding-right: 14px;
}
.layer-box {
    flex: 0 0 166px;
}
.layer-name {
    width: 104px;
    height: 100%;
}
.form-row .field {
    background-color: #9bdbdb;
}
.box.aqua {
    display: flex;
    align-items: center;
    background-color: #9bdbdb;
}
.box .menu-select {
    height: 100%;
}
.space {
    flex: 0 0 150px;
}
.space.last {
    flex: 1;
}
.slots {
    flex: 0 0 187px;
    gap: 7px;
    padding-left: 9px;
}
.slots select {
    flex: 1;
    padding-left: 30px;
}
.thick {
    height: 29px;
}
.thick .aqua {
    flex: 0 0 307px;
    padding: 0 1px;
}
.thick .aqua .field {
    width: 104px;
    height: 24px;
    margin: 0 3px 0 13px;
}
.params {
    flex: 0 0 175px;
}
.params .btn {
    text-align: left;
}
.user {
    flex: 0 0 128px;
    margin-left: 3px;
    padding: 0;
}
.user .field {
    width: 100%;
    height: 100%;
}
.table-wrap {
    height: 306px;
    margin: 0 2px;
    overflow: hidden;
    border: 2px solid;
    border-color: #2d7764 #a8ecd9 #a8ecd9 #2d7764;
}
table {
    width: 832px;
    table-layout: fixed;
    border-collapse: collapse;
}
.w-sel { width: 26px; }
.w-tool { width: 68px; }
.w-count { width: 60px; }
.w-wide { width: 83px; }
.w-type { width: 115px; }
.w-tol { width: 74px; }
th, td {
    padding: 0;
    border: 2px solid #001a14;
}
th {
    height: 36px;
    background: #b0ffff;
    font-weight: bold;
    line-height: 15px;
}
th.cut {
    padding-left: 3px;
    text-align: left;
}
thead::after {
    content: "";
    display: table-row;
    height: 3px;
}
td {
    height: 33px;
}
td .btn {
    width: 62px;
    height: 27px;
    margin: 0 auto;
    text-align: left;
    border-color: #a8ecd9 #2d7764 #2d7764 #a8ecd9;
}
.orange {
    background: #ffc74f;
}
.plain {
    background: #54cfb1;
}
.num {
    padding-right: 3px;
    text-align: right;
}
td.white {
    background: #fff;
}
td.cream {
    background: #ffffce;
}
td .field, td .menu-select {
    display: block;
    width: calc(100% - 4px);
    height: 27px;
    margin: 0 auto;
    border-color: #909090 #c8c8c8 #c8c8c8 #909090;
}
td.active {
    border: 4px solid #000;
}
td.active .field {
    width: 100%;
    height: 25px;
}
td .menu-select {
    width: 105px;
    padding-left: 4px;
    border-color: #b8b890 #90907c #90907c #b8b890;
    background-image: linear-gradient(#ffffce, #ffffce), linear-gradient(#d8d8b4, #d8d8b4), linear-gradient(#90907c, #90907c);
}
.expand {
    display: block;
    width: 20px;
    height: 20px;
    margin: 0 auto;
    border: 1px solid #000;
    background: #fff;
}
.scrollbar {
    display: flex;
    height: 15px;
    margin: 3px 2px 5px;
    border: 1px solid;
    border-color: #2d7764 #a8ecd9 #a8ecd9 #2d7764;
    background: #43a88f;
}
.scrollbar svg {
    flex: 0 0 12px;
    height: 12px;
}
.scrollbar div {
    flex: 1;
    margin: 1px 65px 1px 2px;
    border: 2px solid;
    border-color: #a8ecd9 #2d7764 #2d7764 #a8ecd9;
    background: #54cfb1;
}
.nav-row {
    height: 34px;
    border-top: 1px solid #000;
    border-bottom: 1px solid #000;
}
.nav-row .box {
    border-width: 0 2px 0 1px;
}
.nav-row .btn {
    padding: 0 1px;
}
.nav-row .arrow {
    font-size: 12px;
}
.current {
    flex: 0 0 41px;
    margin-right: 2px;
    padding-left: 4px;
    border-right: 1px solid #000;
    background: #ffc74f;
    font-size: 12px;
    line-height: 32px;
}
.index {
    display: flex;
    align-items: center;
    gap: 3px;
    padding: 0 4px 0 2px;
}
.index .field {
    width: 59px;
    height: 30px;
    border-color: #2d7764 #a8ecd9 #a8ecd9 #2d7764;
    background-color: transparent;
}
.nav-row .icon-box {
    padding: 1px;
}
.nav-row .icon {
    width: 25px;
    padding: 2px;
}
.icon svg {
    width: 17px;
    height: 17px;
    border: 1px solid #000;
}
.nav-row .unit {
    flex: 0 0 88px;
    padding: 0 2px 0 5px;
}
.nav-row .mode {
    flex: 0 0 114px;
    padding: 0 1px 0 5px;
}
.unit select, .mode select {
    flex: 1;
    min-width: 0;
    padding-left: 4px;
}
.merge-row {
    height: 35px;
    margin-top: 4px;
    border-top: 1px solid #000;
}
.merge-row .btn {
    padding: 0 1px;
}
.merge {
    gap: 15px;
    padding: 2px 1px 2px 10px;
}
.merge select {
    width: 213px;
    padding-left: 4px;
}
.actions {
    height: 28px;
}
.actions .box {
    flex: 1;
}

/* taskbar */
.taskbar {
    display: flex;
    align-items: stretch;
    flex: 0 0 40px;
    border-top: 1px solid #6a88a8;
    background: linear-gradient(#3b5a86, #15315c 30%, #0c2550);
    color: #fff;
}
.start {
    width: 59px;
    padding-left: 8px;
}
.start svg {
    width: 38px;
    height: 38px;
}
.tasks {
    display: flex;
    gap: 4px;
}
.tasks button {
    width: 58px;
    border: 1px solid #8b9db8;
    border-radius: 3px;
    background: linear-gradient(135deg, rgba(255, 255, 255, 0.55), rgba(255, 255, 255, 0.12) 60%, rgba(255, 255, 255, 0.25));
}
.tasks .current-task {
    background: linear-gradient(135deg, #e6ebf2, #9fb0ca);
}
.tasks svg {
    width: 32px;
    height: 32px;
    margin: 0 auto;
}
.tray {
    display: flex;
    align-items: center;
    gap: 7px;
    margin-left: auto;
    font: 13px/18px "Noto Sans", sans-serif;
    text-align: center;
}
.tray svg {
    width: 16px;
    height: 16px;
}
.tray time {
    margin: 0 0 0 8px;
}
.show-desktop {
    width: 14px;
    margin-left: 8px;
    border: 1px solid #8b9db8;
    background: linear-gradient(135deg, #6d83a6, #1c3660);
}
```
